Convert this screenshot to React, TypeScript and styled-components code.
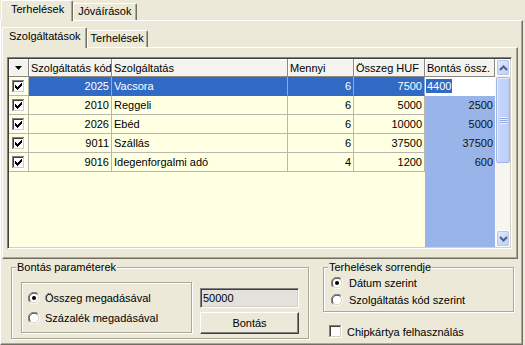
import React from 'react';
import styled, { createGlobalStyle, css } from 'styled-components';

const GlobalStyle = createGlobalStyle`
  html, body {
    margin: 0;
    padding: 0;
    background: #ece9d8;
  }
  body {
    font-family: 'Liberation Sans', Arial, sans-serif;
    font-size: 11px;
    color: #000;
  }
`;

type Align = 'left' | 'right';

interface Row {
  kod: string;
  nev: string;
  mennyi: string;
  osszeg: string;
  bontas: string;
}

const GRID_COLS = '20px 83px 176px 66px 71px 70px';

const columns = ['Szolgáltatás kód', 'Szolgáltatás', 'Mennyi', 'Összeg HUF', 'Bontás össz.'];

const rows: Row[] = [
  { kod: '2025', nev: 'Vacsora', mennyi: '6', osszeg: '7500', bontas: '4400' },
  { kod: '2010', nev: 'Reggeli', mennyi: '6', osszeg: '5000', bontas: '2500' },
  { kod: '2026', nev: 'Ebéd', mennyi: '6', osszeg: '10000', bontas: '5000' },
  { kod: '9011', nev: 'Szállás', mennyi: '6', osszeg: '37500', bontas: '37500' },
  { kod: '9016', nev: 'Idegenforgalmi adó', mennyi: '4', osszeg: '1200', bontas: '600' },
];

const CheckMark: React.FC<{ checked: boolean }> = ({ checked }) => (
  <svg width='13' height='13' viewBox='0 0 13 13'>
    <rect x='0' y='0' width='13' height='13' fill='#fff' />
    <path d='M0 0h12v1H1v11H0z' fill='#808080' />
    <path d='M1 1h10v1H2v9H1z' fill='#404040' />
    <path d='M12 0h1v13H0v-1h12z' fill='#fff' />
    <path d='M11 1h1v11H1v-1h10z' fill='#d4d0c8' />
    {checked && (
      <path
        d='M9 3h1v1H9z M8 4h2v1H8z M3 5h1v1H3z M7 5h3v1H7z M3 6h2v1H3z M6 6h3v1H6z M3 7h5v1H3z M4 8h3v1H4z M5 9h1v1H5z'
        fill='#000'
      />
    )}
  </svg>
);

const RadioMark: React.FC<{ checked: boolean }> = ({ checked }) => (
  <svg width='12' height='12' viewBox='0 0 12 12'>
    <circle cx='6' cy='6' r='5' fill='#fff' />
    <path d='M1.76 10.24 A6 6 0 0 1 10.24 1.76' stroke='#808080' strokeWidth='1' fill='none' />
    <path d='M2.47 9.53 A5 5 0 0 1 9.53 2.47' stroke='#404040' strokeWidth='1' fill='none' />
    <path d='M10.24 1.76 A6 6 0 0 1 1.76 10.24' stroke='#fff' strokeWidth='1' fill='none' />
    <path d='M9.53 2.47 A5 5 0 0 1 2.47 9.53' stroke='#d4d0c8' strokeWidth='1' fill='none' />
    {checked && <circle cx='6' cy='6' r='2' fill='#000' />}
  </svg>
);

const Chevron: React.FC<{ up?: boolean }> = ({ up }) => (
  <svg width='9' height='6' viewBox='0 0 9 6'>
    <path
      d={up ? 'M1 5 L4.5 1.5 L8 5' : 'M1 1 L4.5 4.5 L8 1'}
      stroke='#4d6185'
      strokeWidth='2'
      fill='none'
    />
  </svg>
);

const App: React.FC = () => {
  return (
    <>
      <GlobalStyle />
      <Window>
        <TabStrip>
          <Tab $active>Terhelések</Tab>
          <Tab>Jóváírások</Tab>
        </TabStrip>
        <OuterPanel>
          <TabStrip>
            <Tab $active $narrow>Szolgáltatások</Tab>
            <Tab $narrow>Terhelések</Tab>
          </TabStrip>
          <InnerPanel>
            <GridFrame>
              <Table>
                <HeaderRow>
                  <HeaderCell>
                    <svg width='7' height='4' viewBox='0 0 7 4'>
                      <path d='M0 0h7L3.5 4z' fill='#000' />
                    </svg>
                  </HeaderCell>
                  {columns.map((c) => (
                    <HeaderCell key={c}>{c}</HeaderCell>
                  ))}
                </HeaderRow>
                {rows.map((r, i) => {
                  const sel = i === 0;
                  return (
                    <BodyRow key={r.kod}>
                      <CheckCell>
                        <CheckMark checked />
                      </CheckCell>
                      <Cell $align='right' $selected={sel}>{r.kod}</Cell>
                      <Cell $align='left' $selected={sel}>{r.nev}</Cell>
                      <Cell $align='right' $selected={sel}>{r.mennyi}</Cell>
                      <Cell $align='right' $selected={sel}>{r.osszeg}</Cell>
                      {sel ? (
                        <EditCell>
                          <EditSelection>{r.bontas}</EditSelection>
                        </EditCell>
                      ) : (
                        <SplitCell>{r.bontas}</SplitCell>
                      )}
                    </BodyRow>
                  );
                })}
                <Filler>
                  <FillerSpace />
                  <FillerSplit />
                </Filler>
              </Table>
              <ScrollBar>
                <ScrollButton>
                  <Chevron up />
                </ScrollButton>
                <Thumb>
                  <Grip />
                </Thumb>
                <Track />
                <ScrollButton>
                  <Chevron />
                </ScrollButton>
              </ScrollBar>
            </GridFrame>
          </InnerPanel>
          <BottomArea>
            <GroupBox $width={298} $height={78}>
              <Legend>Bontás paraméterek</Legend>
              <SplitParams>
                <RadioPanel>
                  <OptionRow $height={20} $gap={5}>
                    <RadioMark checked />
                    Összeg megadásával
                  </OptionRow>
                  <OptionRow $height={20} $gap={5}>
                    <RadioMark checked={false} />
                    Százalék megadásával
                  </OptionRow>
                </RadioPanel>
                <ActionColumn>
                  <TextBox>50000</TextBox>
                  <Button>Bontás</Button>
                </ActionColumn>
              </SplitParams>
            </GroupBox>
            <RightColumn>
              <GroupBox $width={191} $height={51}>
                <Legend>Terhelések sorrendje</Legend>
                <OrderOptions>
                  <OptionRow $height={17} $gap={6}>
                    <RadioMark checked />
                    Dátum szerint
                  </OptionRow>
                  <OptionRow $height={17} $gap={6}>
                    <RadioMark checked={false} />
                    Szolgáltatás kód szerint
                  </OptionRow>
                </OrderOptions>
              </GroupBox>
              <ChipRow>
                <CheckMark checked={false} />
                Chipkártya felhasználás
              </ChipRow>
            </RightColumn>
          </BottomArea>
        </OuterPanel>
      </Window>
    </>
  );
};

const Window = styled.div`
  width: 525px;
  height: 345px;
  display: flex;
  flex-direction: column;
  overflow: hidden;
`;

const TabStrip = styled.div`
  display: flex;
  align-items: flex-end;
  height: 20px;
  margin-left: 1px;
`;

const Tab = styled.div<{ $active?: boolean; $narrow?: boolean }>`
  box-sizing: border-box;
  height: 17px;
  padding: 1px ${(p) => (p.$narrow ? 3 : 5)}px 0 ${(p) => (p.$narrow ? 3 : 4)}px;
  line-height: 13px;
  white-space: nowrap;
  background: #ece9d8;
  border-top: 1px solid #fff;
  border-left: 1px solid #fff;
  border-right: 1px solid #716f64;
  box-shadow: inset -1px 0 0 #aca899;
  border-radius: 2px 2px 0 0;

  ${(p) =>
    p.$active &&
    css`
      position: relative;
      z-index: 1;
      height: 21px;
      margin-bottom: -1px;
      padding: 2px ${p.$narrow ? 5 : 8}px 0 ${p.$narrow ? 6 : 9}px;
    `}
`;

const OuterPanel = styled.div`
  box-sizing: border-box;
  width: 523px;
  height: 325px;
  padding-top: 6px;
  display: flex;
  flex-direction: column;
  border-top: 1px solid #fff;
  border-left: 1px solid #fff;
  border-right: 1px solid #716f64;
  border-bottom: 1px solid #716f64;
  box-shadow: inset -1px -1px 0 #aca899;
`;

const InnerPanel = styled.div`
  box-sizing: border-box;
  width: 516px;
  height: 212px;
  margin-left: 1px;
  padding: 9px 0 0 4px;
  border-top: 1px solid #fff;
  border-left: 1px solid #fff;
  border-right: 1px solid #716f64;
  border-bottom: 1px solid #716f64;
  box-shadow: inset -1px -1px 0 #aca899;
`;

const GridFrame = styled.div`
  box-sizing: border-box;
  width: 505px;
  height: 192px;
  display: flex;
  border-top: 1px solid #808080;
  border-left: 1px solid #808080;
  border-right: 1px solid #fff;
  border-bottom: 1px solid #fff;
  box-shadow: inset 1px 1px 0 #404040, inset -1px -1px 0 #d4d0c8;
  padding: 1px;
  background: #ffffe1;
`;

const Table = styled.div`
  width: 486px;
  display: flex;
  flex-direction: column;
`;

const HeaderRow = styled.div`
  display: grid;
  grid-template-columns: ${GRID_COLS};
  height: 18px;
  flex: none;
`;

const HeaderCell = styled.div`
  box-sizing: border-box;
  display: flex;
  align-items: center;
  justify-content: flex-start;
  padding-left: 2px;
  white-space: nowrap;
  overflow: hidden;
  background: #f4f3ee;
  border-right: 1px solid #8c8a80;
  border-bottom: 1px solid #8c8a80;
  box-shadow: inset 1px 1px 0 #fff;

  &:first-child {
    justify-content: center;
    padding-left: 0;
  }
`;

const BodyRow = styled.div`
  display: grid;
  grid-template-columns: ${GRID_COLS};
  height: 19px;
  flex: none;
`;

const cellLines = css`
  box-sizing: border-box;
  border-right: 1px solid #b9b7ad;
  border-bottom: 1px solid #b9b7ad;
`;

const CheckCell = styled.div`
  ${cellLines}
  display: flex;
  align-items: center;
  padding-left: 3px;
`;

const Cell = styled.div<{ $align: Align; $selected?: boolean }>`
  ${cellLines}
  display: flex;
  align-items: center;
  justify-content: ${(p) => (p.$align === 'right' ? 'flex-end' : 'flex-start')};
  padding: 0 2px;
  white-space: nowrap;
  overflow: hidden;

  ${(p) =>
    p.$selected &&
    css`
      background: #316ac5;
      color: #fff;
      border-right-color: #8fa9dc;
      border-bottom-color: #316ac5;
    `}
`;

const SplitCell = styled.div`
  box-sizing: border-box;
  display: flex;
  align-items: center;
  justify-content: flex-end;
  padding: 0 2px;
  background: #99b4e8;
  border-bottom: 1px solid #99b4e8;
  color: #111;
`;

const EditCell = styled.div`
  box-sizing: border-box;
  display: flex;
  align-items: center;
  padding-left: 1px;
  background: #fff;
  border-bottom: 1px solid #fff;
`;

const EditSelection = styled.span`
  background: #316ac5;
  color: #fff;
  line-height: 14px;
  padding: 0 1px;
`;

const Filler = styled.div`
  flex: 1;
  display: flex;
`;

const FillerSpace = styled.div`
  flex: 1;
`;

const FillerSplit = styled.div`
  width: 70px;
  background: #99b4e8;
`;

const ScrollBar = styled.div`
  width: 15px;
  margin-left: 1px;
  display: flex;
  flex-direction: column;
  background: #f6f5f0;
`;

const ScrollButton = styled.div`
  box-sizing: border-box;
  height: 17px;
  flex: none;
  display: flex;
  align-items: center;
  justify-content: center;
  background: linear-gradient(135deg, #e2eafd, #bccdf6);
  border: 1px solid #fff;
  box-shadow: inset 0 0 0 1px #b4c8f6;
  border-radius: 2px;
`;

const Thumb = styled.div`
  box-sizing: border-box;
  height: 86px;
  flex: none;
  margin-top: 1px;
  display: flex;
  align-items: center;
  justify-content: center;
  background: linear-gradient(90deg, #c9d8fc, #bccdf8);
  border: 1px solid #9eb5ea;
  border-radius: 2px;
  box-shadow: inset 1px 1px 0 #e6edfe;
`;

const Grip = styled.div`
  width: 7px;
  height: 7px;
  background: repeating-linear-gradient(
    180deg,
    #eef3ff 0,
    #eef3ff 1px,
    #8fa8e0 1px,
    #8fa8e0 2px
  );
`;

const Track = styled.div`
  flex: 1;
`;

const BottomArea = styled.div`
  flex: 1;
  display: flex;
  gap: 14px;
  padding: 2px 0 0 10px;
`;

const etched = css`
  border: 1px solid #a9a89c;
  box-shadow: inset 1px 1px 0 #fff, 1px 1px 0 #fff;
`;

const GroupBox = styled.fieldset<{ $width: number; $height: number }>`
  box-sizing: border-box;
  width: ${(p) => p.$width}px;
  height: ${(p) => p.$height}px;
  margin: 0;
  padding: 0;
  min-width: 0;
  ${etched}
`;

const Legend = styled.legend`
  margin-left: 4px;
  padding: 0 1px;
  line-height: 13px;
  background: #ece9d8;
`;

const SplitParams = styled.div`
  display: flex;
  gap: 8px;
  padding: 8px 0 0 9px;
`;

const RadioPanel = styled.div`
  box-sizing: border-box;
  width: 171px;
  height: 51px;
  padding: 5px 0 0 6px;
  ${etched}
`;

const OptionRow = styled.div<{ $height: number; $gap: number }>`
  display: flex;
  align-items: center;
  gap: ${(p) => p.$gap}px;
  height: ${(p) => p.$height}px;
  white-space: nowrap;
`;

const ActionColumn = styled.div`
  display: flex;
  flex-direction: column;
  gap: 4px;
  padding-top: 6px;
`;

const TextBox = styled.div`
  box-sizing: border-box;
  width: 99px;
  height: 20px;
  padding: 0 2px;
  display: flex;
  align-items: center;
  background: #e2e1dc;
  border-top: 1px solid #808080;
  border-left: 1px solid #808080;
  border-right: 1px solid #fff;
  border-bottom: 1px solid #fff;
  box-shadow: inset 1px 1px 0 #404040, inset -1px -1px 0 #d4d0c8;
`;

const Button = styled.div`
  box-sizing: border-box;
  width: 99px;
  height: 22px;
  display: flex;
  align-items: center;
  justify-content: center;
  background: #ece9d8;
  border-top: 1px solid #fff;
  border-left: 1px solid #fff;
  border-right: 1px solid #404040;
  border-bottom: 1px solid #404040;
  box-shadow: inset -1px -1px 0 #808080;
`;

const RightColumn = styled.div`
  display: flex;
  flex-direction: column;
`;

const OrderOptions = styled.div`
  padding: 0 0 0 7px;
`;

const ChipRow = styled.div`
  display: flex;
  align-items: center;
  gap: 5px;
  margin: 13px 0 0 6px;
  white-space: nowrap;
`;

export default App;
